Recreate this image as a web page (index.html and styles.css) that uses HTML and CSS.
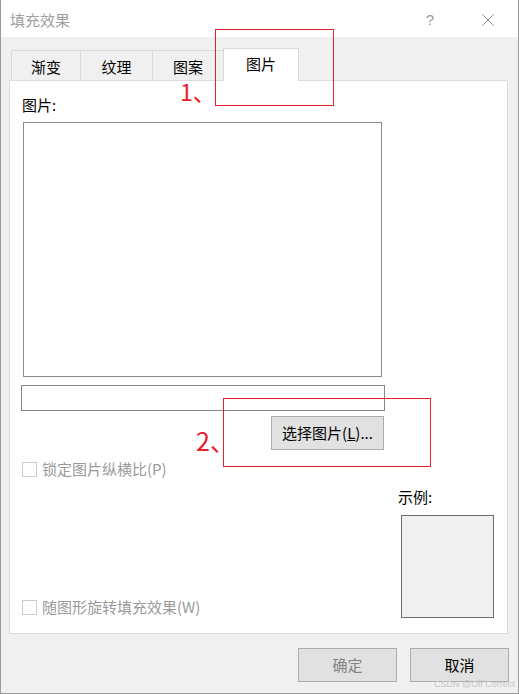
FILE: index.html
```html
<!DOCTYPE html>
<html lang="zh-CN">
<head>
<meta charset="utf-8">
<title>填充效果</title>
<link rel="stylesheet" href="styles.css">
</head>
<body>
<div class="window">
  <div class="title-bar">
    <span class="title">填充效果</span>
    <span class="help">?</span>
    <svg class="close" width="12" height="12" viewBox="0 0 12 12"><path d="M0.5 0.5L11.5 11.5M11.5 0.5L0.5 11.5" stroke="#8a8a8a" stroke-width="1" fill="none"/></svg>
  </div>
  <div class="client">
    <div class="tabs">
      <div class="tab tab-1">渐变</div>
      <div class="tab tab-2">纹理</div>
      <div class="tab tab-3">图案</div>
      <div class="tab tab-active">图片</div>
    </div>
    <div class="panel">
      <div class="label">图片:</div>
      <div class="picture-box"></div>
      <div class="path-box"></div>
      <div class="select-row"><button class="btn select-btn">选择图片(<u>L</u>)...</button></div>
      <div class="check check-lock"><span class="box"></span>锁定图片纵横比(P)</div>
      <div class="bottom">
        <div class="check check-rotate"><span class="box"></span>随图形旋转填充效果(W)</div>
        <div class="sample">
          <div class="sample-label">示例:</div>
          <div class="preview"></div>
        </div>
      </div>
    </div>
    <div class="footer">
      <button class="btn btn-ok">确定</button>
      <button class="btn btn-cancel">取消</button>
    </div>
  </div>
  <div class="mark mark-1"></div>
  <div class="num num-1">1、</div>
  <div class="mark mark-2"></div>
  <div class="num num-2">2、</div>
  <div class="watermark">CSDN @Olf Correct</div>
</div>
</body>
</html>
```
FILE: styles.css
```css
* {
  box-sizing: border-box;
  margin: 0;
  padding: 0;
}
html, body {
  width: 519px;
  height: 694px;
  overflow: hidden;
  background: #f0f0f0;
}
body {
  font-family: "Noto Sans CJK SC", "Noto Sans", sans-serif;
  font-size: 15px;
  line-height: 20px;
  color: #000;
}
.window {
  position: relative;
  width: 519px;
  height: 694px;
  background: #f0f0f0;
  border-left: 1px solid #9b9b9b;
  border-right: 1px solid #9b9b9b;
  border-bottom: 1px solid #9b9b9b;
  display: flex;
  flex-direction: column;
}
.title-bar {
  height: 37px;
  flex: none;
  background: #fff;
  display: flex;
  align-items: center;
  padding: 2px 0 0 9px;
}
.title {
  flex: 1;
  color: #a0a0a0;
}
.help {
  width: 12px;
  text-align: center;
  font-family: "Liberation Sans", sans-serif;
  font-size: 15px;
  color: #9a9a9a;
  margin-right: 46px;
}
.close {
  margin-right: 24px;
}
.client {
  flex: 1;
  display: flex;
  flex-direction: column;
}
.tabs {
  display: flex;
  align-items: flex-start;
  height: 33px;
  margin: 11px 0 -1px 10px;
}
.tab {
  margin-top: 2px;
  height: 30px;
  border-top: 1px solid #d9d9d9;
  border-left: 1px solid #d9d9d9;
  text-align: center;
  padding-top: 6px;
  background: #f0f0f0;
}
.tab-1 { width: 69px; }
.tab-2 { width: 72px; }
.tab-3 { width: 71px; }
.tab-active {
  margin-top: 0;
  height: 33px;
  width: 76px;
  background: #fff;
  border: 1px solid #d9d9d9;
  border-bottom: none;
  position: relative;
  z-index: 1;
  padding-top: 5px;
}
.panel {
  margin-left: 8px;
  width: 499px;
  height: 554px;
  flex: none;
  background: #fff;
  border: 1px solid #dcdcdc;
  padding: 14px 0 0 11px;
  display: flex;
  flex-direction: column;
}
.label {
  margin-left: 1px;
}
.picture-box {
  margin: 7px 0 0 2px;
  width: 359px;
  height: 255px;
  border: 1px solid #878a93;
}
.path-box {
  margin-top: 8px;
  width: 364px;
  height: 26px;
  border: 1px solid #82868d;
}
.select-row {
  margin-top: 5px;
  width: 364px;
  display: flex;
  justify-content: flex-end;
  padding-right: 1px;
}
.btn {
  height: 34px;
  background: #e1e1e1;
  border: 1px solid #adadad;
  font: inherit;
  line-height: 20px;
  color: #000;
}
.select-btn {
  width: 113px;
}
.check {
  display: flex;
  align-items: center;
  height: 20px;
  color: #9a9a9a;
}
.check-lock {
  margin-top: 9px;
}
.check-rotate {
  margin-bottom: 1px;
}
.box {
  width: 15px;
  height: 15px;
  border: 1px solid #cccccc;
  background: #fff;
  margin: 0 5px 0 1px;
}
.bottom {
  flex: 1;
  display: flex;
  justify-content: space-between;
  align-items: flex-end;
  padding: 0 13px 15px 0;
}
.sample {
  display: flex;
  flex-direction: column;
  align-items: flex-start;
}
.preview {
  margin: 8px 0 0 3px;
  width: 93px;
  height: 103px;
  background: #f0f0f0;
  border: 1px solid #6e6e6e;
}
.footer {
  display: flex;
  justify-content: flex-end;
  gap: 13px;
  margin-top: 14px;
  padding-right: 9px;
}
.footer .btn {
  width: 99px;
}
.footer .btn-ok {
  color: #838383;
}
.mark {
  position: absolute;
  border: 1px solid #e8202c;
}
.mark-1 {
  left: 214px;
  top: 29px;
  width: 119px;
  height: 77px;
}
.mark-2 {
  left: 222px;
  top: 398px;
  width: 208px;
  height: 69px;
}
.num {
  position: absolute;
  color: #e8202c;
  line-height: 0.8;
  white-space: nowrap;
}
.num-1 {
  left: 179px;
  top: 82px;
  font-size: 23px;
}
.num-2 {
  left: 195px;
  top: 430px;
  font-size: 25px;
}
.watermark {
  position: absolute;
  left: 433px;
  top: 679px;
  font-family: "Liberation Sans", sans-serif;
  font-size: 9px;
  line-height: 10px;
  color: #c4c4c4;
  white-space: nowrap;
}
```
